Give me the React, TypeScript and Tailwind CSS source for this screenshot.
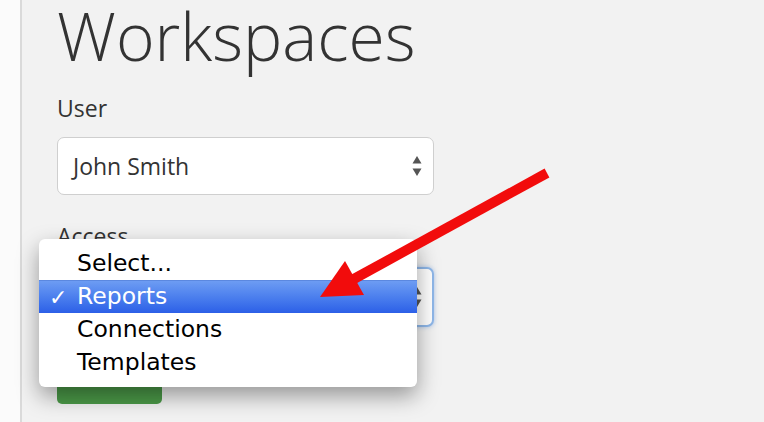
import React from 'react';

/* Up/down triangles used by the native-looking selects */
function SelectArrows({ className = '' }: { className?: string }) {
  return (
    <svg width="10" height="22" viewBox="0 0 10 22" className={className}>
      <path d="M5 1 L9.5 8.5 L0.5 8.5 Z" fill="#555" />
      <path d="M5 21 L9.5 13.5 L0.5 13.5 Z" fill="#555" />
    </svg>
  );
}

const options = ['Select...', 'Reports', 'Connections', 'Templates'];

export default function App() {
  return (
    <div className="relative flex h-[422px] w-[764px] overflow-hidden bg-white">
      {/* left gutter */}
      <div className="w-[22px] shrink-0 bg-[#fbfbfb] border-r-2 border-[#dadada]" />

      {/* main panel */}
      <div
        className="relative flex flex-1 flex-col bg-[#f2f2f2] pl-[35px]"
        style={{ fontFamily: '"Open Sans", sans-serif' }}
      >
        <h1 className="mt-[2px] text-[66px] font-light leading-[66px] text-[#333]">
          Workspaces
        </h1>

        <label className="mt-[26px] text-[23px] leading-[28px] text-[#333]">User</label>
        <div className="mt-[15px] flex h-[58px] w-[377px] items-center justify-between rounded-[7px] border border-[#cfcfcf] bg-white pl-[15px] pr-[11px]">
          <span className="text-[23px] text-[#333]">John Smith</span>
          <SelectArrows />
        </div>

        <label className="mt-[27px] text-[23px] leading-[28px] text-[#333]">Access</label>
        <div className="mt-[17px] flex h-[60px] w-[377px] items-center justify-between rounded-[7px] border-2 border-[#8fb8ea] bg-white pl-[15px] pr-[10px] shadow-[0_0_4px_rgba(102,153,230,0.5)]">
          <span className="text-[23px] text-[#333]">Reports</span>
          <SelectArrows />
        </div>

        <button className="mt-[25px] h-[52px] w-[105px] rounded-[5px] bg-[#4b9a48]" />

        {/* open dropdown list */}
        <div
          className="absolute left-[17px] top-[239px] w-[378px] rounded-[6px] bg-white py-[8px] shadow-[0_9px_22px_rgba(0,0,0,0.38)]"
          style={{ fontFamily: '"DejaVu Sans", sans-serif' }}
        >
          {options.map((o) => {
            const active = o === 'Reports';
            return (
              <div
                key={o}
                className={
                  active
                    ? 'relative flex h-[33px] items-center border-t border-[#5b88e0] bg-gradient-to-b from-[#6d9cf3] to-[#2c5fe7] pl-[38px] text-[23.5px] text-white'
                    : 'relative flex h-[33px] items-center pl-[38px] text-[23.5px] text-black'
                }
              >
                {active && <span className="absolute left-[10px] text-[22px] font-bold">✓</span>}
                {o}
              </div>
            );
          })}
        </div>
      </div>

      {/* red annotation arrow */}
      <svg className="absolute left-[300px] top-[150px]" width="264" height="160" viewBox="300 150 264 160">
        <line x1="547" y1="173" x2="352" y2="280" stroke="#f20c0c" strokeWidth="10" />
        <polygon points="320,297 345,261 364,295" fill="#f20c0c" />
      </svg>
    </div>
  );
}
